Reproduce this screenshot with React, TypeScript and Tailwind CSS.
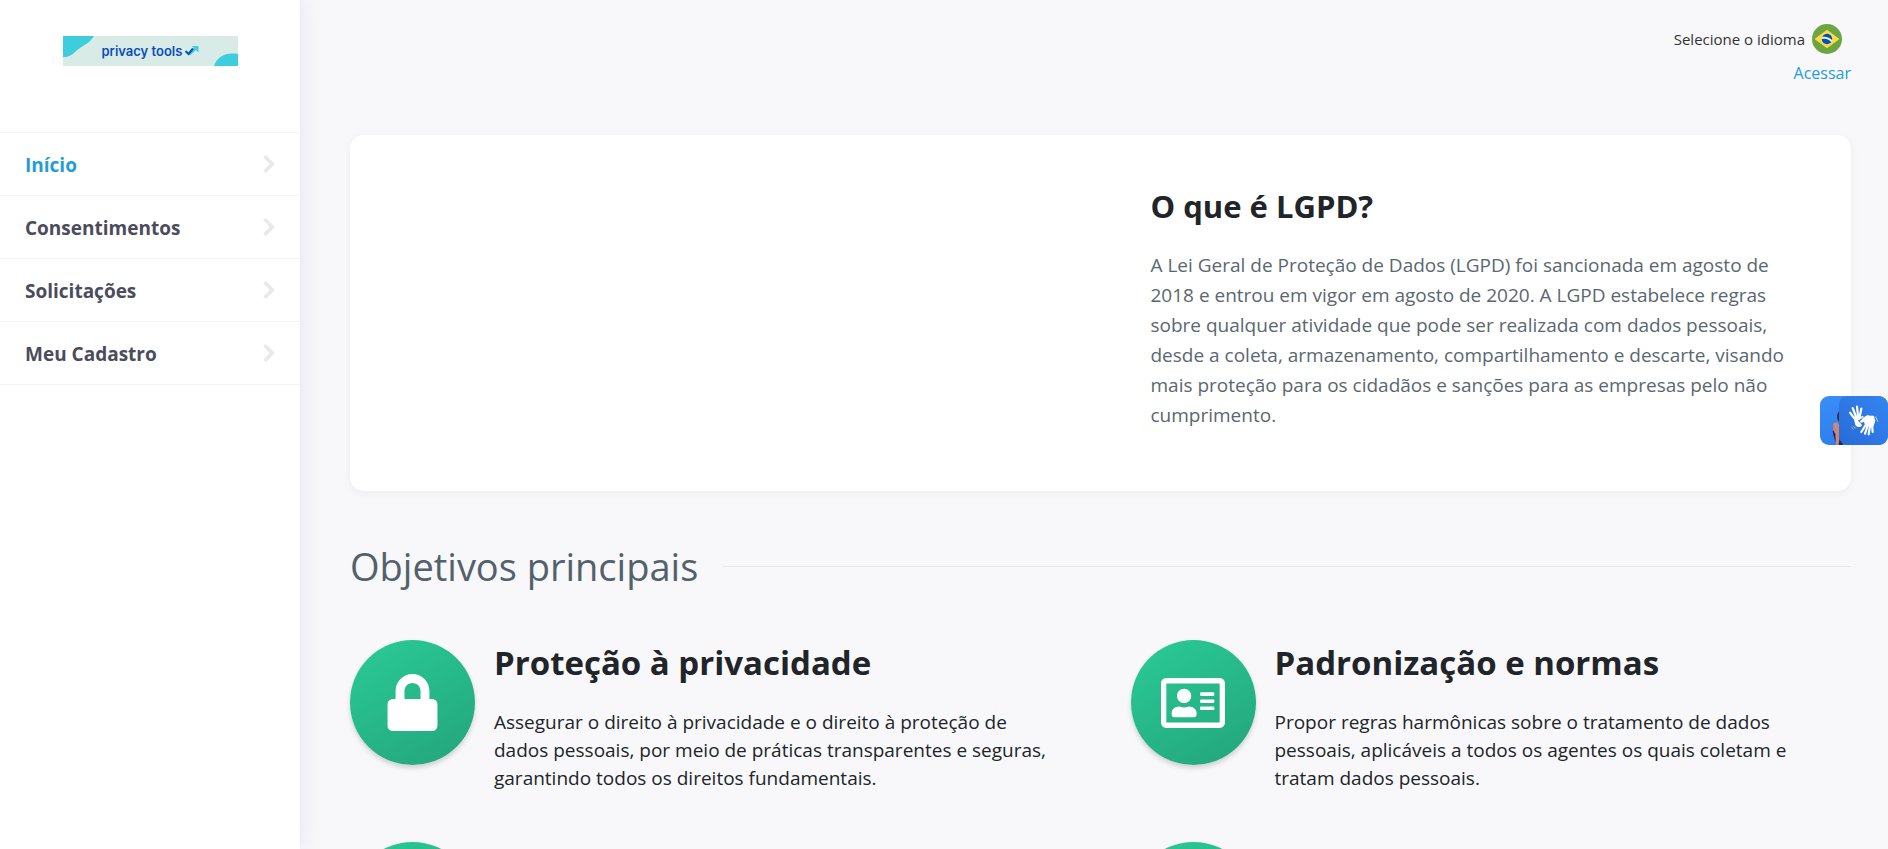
import React from 'react'
import { FaChevronRight, FaLock, FaRegAddressCard } from 'react-icons/fa'

const menu = ['Início', 'Consentimentos', 'Solicitações', 'Meu Cadastro']

const goals = [
  {
    title: 'Proteção à privacidade',
    text: 'Assegurar o direito à privacidade e o direito à proteção de dados pessoais, por meio de práticas transparentes e seguras, garantindo todos os direitos fundamentais.',
    icon: <FaLock size={57} />,
  },
  {
    title: 'Padronização e normas',
    text: 'Propor regras harmônicas sobre o tratamento de dados pessoais, aplicáveis a todos os agentes os quais coletam e tratam dados pessoais.',
    icon: <FaRegAddressCard size={64} />,
  },
  { title: '', text: '', icon: null },
  { title: '', text: '', icon: null },
]

function Logo() {
  return (
    <div className="relative flex h-[30px] w-[175px] items-center bg-[#d8ebe6] pl-[39px]">
      <svg aria-hidden="true" className="absolute inset-0" width="175" height="30" viewBox="0 0 175 30">
        <path fill="#3dcddd" d="M0 0h31C26 8 20 9 13 15 9 19 6 21 0 21z" />
        <path fill="#3dcddd" d="M151 30c3-9 11-14 24-12v12z" />
        <path d="M126 18.500L133 12" stroke="#3dcddd" strokeWidth="3" fill="none" />
        <path d="M129 10h6.500v6.500l-2-2-2.500-2.500z" fill="#3dcddd" />
        <path d="M122.500 15l3 3L130 12.500" stroke="#0b4dbd" strokeWidth="2" fill="none" />
      </svg>
      <span className="relative text-[13px] leading-5 font-semibold whitespace-nowrap text-[#0b4dbd] font-['Inter',sans-serif]">privacy tools</span>
    </div>
  )
}

function Sidebar() {
  return (
    <aside className="z-10 w-[300px] shrink-0 bg-white shadow-[0_0_20px_rgba(60,60,110,0.12)]">
      <div className="flex h-[132px] justify-center pt-9">
        <a href="#inicio" aria-label="privacy tools" className="h-[30px]"><Logo /></a>
      </div>
      <nav className="border-t border-[#f2f3f4]">
        {menu.map((item, i) => (
          <a
            key={item}
            href="#"
            className={`flex h-[63px] items-center justify-between border-b border-[#f2f3f4] pr-[21px] pl-[25px] text-[19px] font-bold ${i === 0 ? 'text-[#239dd8]' : 'text-[#4a4c5c]'}`}
          >
            <span className="pt-0.5">{item}</span>
            <FaChevronRight className="size-5 stroke-[#e9e9e9] stroke-[16px] text-[#e9e9e9]" />
          </a>
        ))}
      </nav>
    </aside>
  )
}

function BrazilFlag() {
  return (
    <svg aria-hidden="true" width="30" height="30" viewBox="0 0 512 512">
      <circle cx="256" cy="256" r="256" fill="#6da544" />
      <path fill="#ffda44" d="M256 100l212 156-212 156L44 256z" />
      <circle cx="256" cy="256" r="89" fill="#f0f0f0" />
      <path fill="#0052b4" d="M212 250c-15 0-31 3-45 7 1 49 40 89 89 89 30 0 57-15 73-38-28-35-70-58-117-58zM343 274c2-6 2-12 2-18 0-49-40-89-89-89-37 0-69 22-82 54 12-3 25-4 38-4 51 0 97 22 131 57z" />
    </svg>
  )
}

function GoalItem({ goal }: { goal: (typeof goals)[number] }) {
  return (
    <div className="flex min-h-[125px] gap-[19px]">
      <div className="flex size-[125px] shrink-0 items-center justify-center rounded-full bg-linear-[150deg] from-[#2acb97] to-[#23a47a] text-white shadow-[0_3px_5px_rgba(0,0,0,0.16)]">
        {goal.icon}
      </div>
      {goal.title && (
        <div className="pr-6">
          <h3 className="mb-[22px] text-[33px] leading-[46px] font-bold text-[#212529]">{goal.title}</h3>
          <p className="text-[19px] leading-[28px] text-[#212529]">{goal.text}</p>
        </div>
      )}
    </div>
  )
}

function LibrasWidget() {
  return (
    <button type="button" aria-label="Acessível em Libras" className="absolute top-[396px] right-0 z-20 flex h-[49px] w-[68px] overflow-hidden rounded-[9px]">
      <svg aria-hidden="true" width="68" height="49" viewBox="0 0 204 147">
        <defs>
          <linearGradient id="back" x1="0" y1="0" x2="0" y2="1">
            <stop offset="0" stopColor="#3a8df8" />
            <stop offset="1" stopColor="#2f7fee" />
          </linearGradient>
          <linearGradient id="front" x1="1" y1="0" x2="0" y2="1">
            <stop offset="0" stopColor="#3585f2" />
            <stop offset="1" stopColor="#276bd8" />
          </linearGradient>
        </defs>
        <rect width="204" height="147" fill="url(#back)" />
        {/* interpreter, mostly hidden by the front tile */}
        <path d="M60 44c-10 4-11 22-5 32h12V44z" fill="#3b2f38" />
        <path d="M38 104l30-6v49H50c-3-12-10-24-12-43z" fill="#23235c" />
        <path d="M40 84c4-8 14-6 17 4l3 26-4 33h-8l-2-33c-6-8-8-18-6-30z" fill="#c98779" />
        <rect x="57" width="147" height="147" rx="26" fill="url(#front)" />
        <g fill="none" stroke="#fff" strokeLinecap="round" strokeLinejoin="round">
          <path strokeWidth="6.500" d="M102 66L90 50M108 62L98 36M114 60L111 32M119 62L124 38" />
          <path strokeWidth="5" d="M110 74l18-12" />
          <path strokeWidth="5" d="M122 76l18-14 20 0" />
          <path strokeWidth="6.500" d="M138 86l-14 22M143 90l-8 23M150 90l-4 25M156 86l2 22" />
          <path strokeWidth="2" d="M95 94l5 5M102 92l4 4M169 66l4 10M165 64l3-1" />
        </g>
        <path fill="#fff" d="M100 62l22-4 2 7-12 8 10 8 5 8c-8 6-17 5-21-2z" />
        <path fill="#fff" d="M128 66l14-8 20 4 4 12-6 18-24-2-4-12-10 2z" />
      </svg>
    </button>
  )
}

export default function App() {
  return (
    <div className="relative flex h-screen overflow-hidden bg-[#f8f8fb] font-['Open_Sans','Noto_Sans',sans-serif]">
      <Sidebar />
      <main className="min-w-0 flex-1 pr-[37px] pl-[50px]">
        <header className="flex h-[135px] flex-col items-end pt-6">
          <button type="button" className="mr-[9px] flex items-center gap-[7px] text-[15px] text-[#333]">
            Selecione o idioma
            <BrazilFlag />
          </button>
          <a href="#acessar" className="mt-[7px] text-[16px] leading-6 text-[#239dd8]">Acessar</a>
        </header>

        <section className="grid grid-cols-2 rounded-[14px] bg-white shadow-[0_2px_8px_rgba(0,0,0,0.05)]">
          <div className="col-start-2 px-[50px] pt-[47px] pb-[61px]">
            <h2 className="mb-5 text-[31px] leading-[48px] font-bold text-[#212529]">O que é LGPD?</h2>
            <p className="text-[19px] leading-[30px] text-[#5a6770]">
              A Lei Geral de Proteção de Dados (LGPD) foi sancionada em agosto de 2018 e entrou em vigor em agosto de 2020. A LGPD estabelece regras sobre qualquer atividade que pode ser realizada com dados pessoais, desde a coleta, armazenamento, compartilhamento e descarte, visando mais proteção para os cidadãos e sanções para as empresas pelo não cumprimento.
            </p>
          </div>
        </section>

        <section>
          <div className="flex items-center gap-[25px] pt-[46px] pb-[45px]">
            <h2 className="text-[38px] leading-[58px] text-[#52616b]">Objetivos principais</h2>
            <div className="h-px flex-1 bg-[#e6e8ea]" />
          </div>
          <div className="grid grid-cols-2 gap-x-[60px] gap-y-[50px]">
            {goals.map((goal, i) => (
              <GoalItem key={i} goal={goal} />
            ))}
          </div>
        </section>
      </main>
      <LibrasWidget />
    </div>
  )
}
